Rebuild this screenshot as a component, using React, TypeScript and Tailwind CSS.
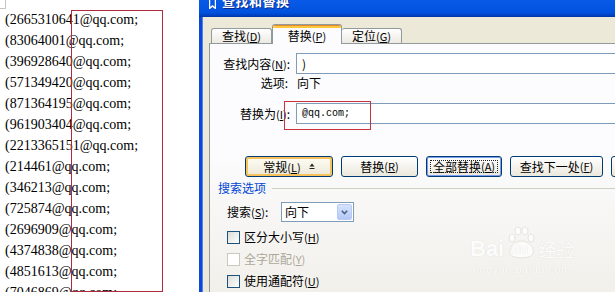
const emails = [
  "(2665310641@qq.com;",
  "(83064001@qq.com;",
  "(396928640@qq.com;",
  "(571349420@qq.com;",
  "(871364195@qq.com;",
  "(961903404@qq.com;",
  "(2213365151@qq.com;",
  "(214461@qq.com;",
  "(346213@qq.com;",
  "(725874@qq.com;",
  "(2696909@qq.com;",
  "(4374838@qq.com;",
  "(4851613@qq.com;",
  "(7046869@qq.com;",
];

function Key({ k }: { k: string }) {
  return (
    <span className="text-[11px]">
      (<span className="underline underline-offset-1">{k}</span>)
    </span>
  );
}

function Checkbox({ label, k, disabled }: { label: string; k: string; disabled?: boolean }) {
  return (
    <div className="flex items-center h-[22px] pl-[17px]">
      <div
        className={
          disabled
            ? "w-[13px] h-[13px] border border-[#cac8bb] bg-white"
            : "w-[13px] h-[13px] border border-[#1c5180] bg-gradient-to-br from-[#dcdcd7] to-white"
        }
      />
      <span className={disabled ? "ml-[4px] text-[#aca899]" : "ml-[4px]"}>
        {label}
        <Key k={k} />
      </span>
    </div>
  );
}

export default function App() {
  return (
    <div className="relative w-[615px] h-[292px] overflow-hidden flex bg-white">
      {/* DOCUMENT */}
      <div className="relative w-[199px] shrink-0 bg-white pt-[9px] pl-[5px] font-['Liberation_Serif',serif] text-[14px] leading-[21px] text-black">
        <div className="absolute left-0 top-0 w-[6px] h-[9px] border-r border-b border-[#c4c4c4]" />
        {emails.map((e) => (
          <div key={e} className="whitespace-nowrap">
            {e}
          </div>
        ))}
        <div className="absolute left-[71px] top-[10px] w-[92px] h-[282px] border border-[#b02a3e]" />
      </div>

      {/* DIALOG */}
      <div className="flex-1 flex flex-col font-['Noto_Sans_CJK_SC',sans-serif] text-[12px] text-black">
        {/* title bar */}
        <div className="h-[17px] shrink-0 flex items-end pb-[10px] pl-[10px] bg-gradient-to-b from-[#0a5ae8] via-[#0052de] via-75% to-[#0036ad] overflow-hidden">
          <svg width="7" height="10" viewBox="0 0 7 10" className="mb-[-2px]">
            <path d="M0.5 0 V9.5 L3.5 7 L6.5 9.5 V0" fill="none" stroke="white" strokeWidth="1.5" />
          </svg>
          <span className="ml-[6px] text-white font-bold text-[13px] leading-none tracking-[0.5px] [text-shadow:1px_1px_0_#0a2a8a]">
            查找和替换
          </span>
        </div>

        <div className="flex-1 flex">
          <div className="w-[3px] bg-[#0c48d6]" />
          <div className="w-[1px] bg-[#4f82ec]" />
          <div className="flex-1 bg-[#ece9d8] pl-[6px] pt-[7px] overflow-hidden">
            {/* tabs */}
            <div className="relative z-10 flex items-end h-[20px] -mb-[1px] pl-[2px]">
              <div className="w-[61px] h-[15px] mb-[1px] border border-b-0 border-[#919b9c] rounded-t-[3px] bg-gradient-to-b from-white to-[#eceae3] flex items-center justify-center leading-none">
                查找<Key k="D" />
              </div>
              <div className="w-[70px] h-[20px] border border-b-0 border-[#919b9c] rounded-t-[3px] bg-[#fcfcfe] flex flex-col overflow-hidden">
                <div className="h-[1px] bg-[#e68b2c]" />
                <div className="h-[2px] bg-[#ffc73c]" />
                <div className="flex-1 flex items-center justify-center leading-none">
                  替换<Key k="P" />
                </div>
              </div>
              <div className="w-[60px] h-[15px] mb-[1px] border border-b-0 border-l-0 border-[#919b9c] rounded-t-[3px] bg-gradient-to-b from-white to-[#eceae3] flex items-center justify-center leading-none">
                定位<Key k="G" />
              </div>
            </div>

            {/* tab page */}
            <div className="w-[420px] h-[260px] border border-[#919b9c] bg-gradient-to-b from-[#fcfcfe] from-40% to-[#f1efe9] pt-[9px]">
              <div className="flex items-center h-[21px]">
                <div className="w-[80px] text-right whitespace-nowrap">
                  查找内容<Key k="N" />:
                </div>
                <div className="ml-[6px] flex-1 h-[21px] border border-[#7f9db9] bg-white pl-[5px] flex items-center">
                  )
                </div>
              </div>
              <div className="flex items-center h-[17px]">
                <div className="w-[78px] text-right">选项:</div>
                <div className="ml-[9px]">向下</div>
              </div>
              <div className="flex items-center h-[21px] mt-[12px]">
                <div className="w-[80px] text-right whitespace-nowrap">
                  替换为<Key k="I" />:
                </div>
                <div className="ml-[6px] flex-1 h-[21px] border border-[#7f9db9] bg-white pl-[5px] flex items-center font-['Liberation_Mono',monospace] text-[10px]">
                  @qq.com;
                </div>
              </div>

              {/* buttons */}
              <div className="flex h-[21px] mt-[32px] pl-[35px] gap-[8px]">
                <div className="w-[88px] shrink-0 rounded-[3px] border border-[#003c74] bg-gradient-to-b from-[#fffdf5] to-[#ece7d6] shadow-[inset_0_0_0_2px_#f7c25c] flex items-center justify-center gap-[8px]">
                  <span>
                    常规<Key k="L" />
                  </span>
                  <svg width="6" height="7" viewBox="0 0 6 7">
                    <path d="M3 0.5 L5.5 3.5 H0.5 Z" fill="#222" />
                    <rect x="0.5" y="5" width="5" height="1" fill="#222" />
                  </svg>
                </div>
                <div className="w-[77px] shrink-0 rounded-[3px] border border-[#003c74] bg-gradient-to-b from-white to-[#ebe8dc] flex items-center justify-center">
                  替换<Key k="R" />
                </div>
                <div className="w-[76px] shrink-0 rounded-[3px] border border-[#003c74] bg-gradient-to-b from-white to-[#ebe8dc] shadow-[inset_0_0_0_1px_#7d9ef0] p-[3px]">
                  <div className="w-full h-full border border-dotted border-[#222] flex items-center justify-center whitespace-nowrap">
                    全部替换<Key k="A" />
                  </div>
                </div>
                <div className="w-[93px] shrink-0 rounded-[3px] border border-[#003c74] bg-gradient-to-b from-white to-[#ebe8dc] flex items-center justify-center whitespace-nowrap">
                  查找下一处<Key k="F" />
                </div>
                <div className="w-[75px] shrink-0 rounded-[3px] border border-[#003c74] bg-gradient-to-b from-white to-[#ebe8dc]" />
              </div>

              {/* search options */}
              <div className="flex items-center h-[16px] mt-[3px] pl-[8px]">
                <span className="text-[#0046d5]">搜索选项</span>
                <div className="ml-[6px] flex-1 h-[1px] bg-[#d0d0bf]" />
              </div>
              <div className="flex items-center h-[20px] mt-[6px] pl-[17px]">
                <div className="w-[54px] whitespace-nowrap">
                  搜索<Key k="S" />:
                </div>
                <div className="w-[73px] h-[20px] border border-[#7f9db9] bg-white flex items-center pl-[3px] pr-[1px]">
                  <span className="flex-1">向下</span>
                  <div className="w-[15px] h-[16px] rounded-[2px] bg-gradient-to-b from-[#d6e3fd] to-[#b4c8f6] border border-[#b7cbf5] flex items-center justify-center">
                    <svg width="7" height="5" viewBox="0 0 7 5">
                      <path d="M0.8 0.8 L3.5 3.6 L6.2 0.8" fill="none" stroke="#4d6185" strokeWidth="1.6" />
                    </svg>
                  </div>
                </div>
              </div>
              <div className="mt-[4px]">
                <Checkbox label="区分大小写" k="H" />
                <Checkbox label="全字匹配" k="Y" disabled />
                <Checkbox label="使用通配符" k="U" />
              </div>
            </div>
          </div>
        </div>
      </div>

      {/* annotation over replace field */}
      <div className="absolute left-[284px] top-[101px] w-[87px] h-[29px] border border-[#c8323c]" />

      {/* watermark */}
      <div className="absolute left-[470px] top-[226px] flex flex-col items-center text-white [text-shadow:0_0_1px_#d6d3ca] font-['Liberation_Sans',sans-serif] opacity-80">
        <div className="flex items-end">
          <span className="text-[22px] font-bold leading-none">Bai</span>
          <div className="relative w-[34px] h-[34px]">
            <svg width="34" height="34" viewBox="0 0 34 34" className="absolute inset-0">
              <g fill="white" stroke="#dcd9d0" strokeWidth="0.8">
                <ellipse cx="8" cy="12" rx="3" ry="4" />
                <ellipse cx="14" cy="5" rx="3" ry="4" />
                <ellipse cx="21" cy="5" rx="3" ry="4" />
                <ellipse cx="27" cy="12" rx="3" ry="4" />
                <path d="M6 28 C4 20 12 15 17 15 C23 15 31 20 29 28 C27 33 8 33 6 28 Z" />
              </g>
            </svg>
            <span className="absolute left-[7px] top-[16px] text-[14px] font-bold leading-none text-white">du</span>
          </div>
          <span className="text-[18px] font-['Noto_Sans_CJK_SC',sans-serif] leading-none mb-[2px]">经验</span>
        </div>
        <span className="text-[11px] leading-none mt-[4px] tracking-[0.5px]">jingyan.baidu.com</span>
      </div>
    </div>
  );
}
